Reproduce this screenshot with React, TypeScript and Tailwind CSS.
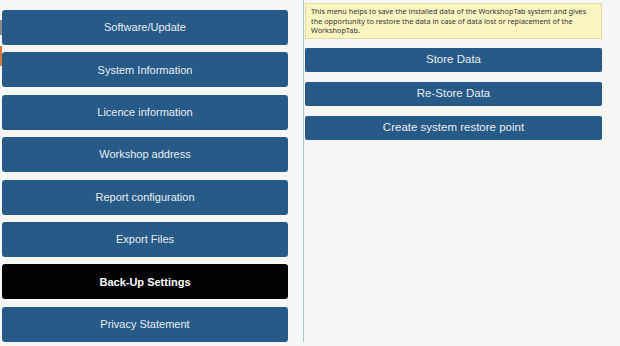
import React from "react"

const menu = [
    "Software/Update",
    "System Information",
    "Licence information",
    "Workshop address",
    "Report configuration",
    "Export Files",
    "Back-Up Settings",
    "Privacy Statement",
]

const actions = ["Store Data", "Re-Store Data", "Create system restore point"]

export default function App() {
    return (
        <div className="relative flex h-[346px] w-[620px] overflow-hidden bg-[#f7f7f7] font-['Liberation_Sans',Arial,sans-serif]">
            {/* stray marks on the window edge */}
            <div className="absolute left-0 top-[20px] h-[15px] w-[2px] bg-[#8a8a8a]" />
            <div className="absolute left-0 top-[46px] h-[20px] w-[2px] bg-[#d9783a]" />

            <div className="flex w-[303px] flex-col gap-[7.4px] pl-[2px] pr-[15px] pt-[10px]">
                {menu.map((label) => (
                    <button
                        key={label}
                        className={
                            label === "Back-Up Settings"
                                ? "h-[35px] w-full rounded-[3px] bg-black text-[11px] font-bold text-white"
                                : "h-[35px] w-full rounded-[3px] bg-[#285a87] text-[11px] text-[#e6edf4]"
                        }
                    >
                        {label}
                    </button>
                ))}
            </div>

            <div className="mb-[4px] w-px bg-[#a9c4dc]" />

            <div className="flex w-[298px] flex-col pl-[1px] pt-[3px]">
                <div className="h-[36px] border border-[#e3dc9c] bg-[#fbf6c1] px-[5px] pt-[3px] font-['Noto_Sans',sans-serif] text-[7.3px] leading-[9.5px] text-[#333]">
                    This menu helps to save the installed data of the WorkshopTab system and gives the opportunity to restore the data in case of data lost or replacement of the WorkshopTab.
                </div>
                <div className="mt-[9px] flex flex-col gap-[10px]">
                    {actions.map((label) => (
                        <button
                            key={label}
                            className="h-[24px] w-full rounded-[2px] bg-[#285a87] text-[11.5px] text-[#e6edf4]"
                        >
                            {label}
                        </button>
                    ))}
                </div>
            </div>
        </div>
    )
}
